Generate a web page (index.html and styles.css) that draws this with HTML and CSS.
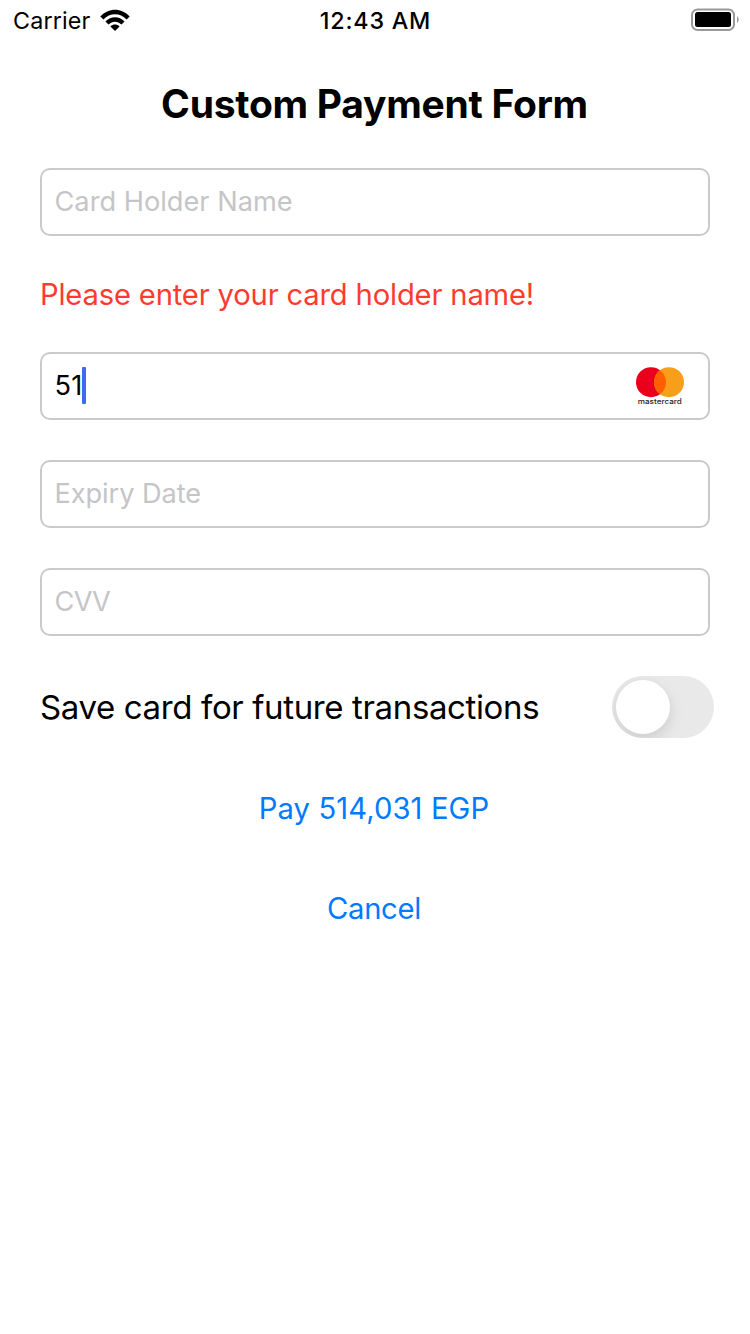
FILE: index.html
```html
<!DOCTYPE html>
<html lang="en">
<head>
<meta charset="utf-8">
<title>Custom Payment Form</title>
<link rel="stylesheet" href="styles.css">
</head>
<body>
<header class="status">
  <div class="carrier"><span class="carrier-name">Carrier</span>
    <svg class="wifi" width="30" height="22" viewBox="0 0 30 22">
      <path d="M.3 7.4C8.4-1.6 21.600-1.6 29.700 7.400L26.600 10.500C20.200 3.600 9.800 3.600 3.400 10.500Z"/>
      <path d="M5.400 12.500C10.900 6.700 19.100 6.700 24.600 12.500L21.500 15.600C17.700 11.700 12.300 11.700 8.500 15.600Z"/>
      <path d="M10.400 17.400C13.100 14.900 16.900 14.900 19.600 17.400L15 22Z"/>
    </svg>
  </div>
  <time class="clock">12:43 AM</time>
  <svg class="battery" width="50" height="24" viewBox="0 0 50 24">
    <rect x="3" y="1.500" width="42" height="20.500" rx="5.500" fill="none" stroke="#999" stroke-width="2"/>
    <rect x="6" y="4" width="36" height="15" rx="2.500" fill="#000"/>
    <path d="M48 8Q49.700 9.300 49.700 11.500T48 15Z" fill="#999"/>
  </svg>
</header>
<main class="form">
  <h1 class="title">Custom Payment Form</h1>
  <div class="field"><span class="hint">Card Holder Name</span></div>
  <p class="error">Please enter your card holder name!</p>
  <div class="field">
    <span class="value">51</span><span class="caret"></span>
    <svg class="brand" width="50" height="42" viewBox="0 0 50 42">
      <circle cx="16" cy="18.200" r="15" fill="#eb001b"/>
      <circle cx="34" cy="18.200" r="15" fill="#f79e1b"/>
      <path d="M25 6.200a15 15 0 0 1 0 24a15 15 0 0 1 0-24z" fill="#ff5f00"/>
      <text class="brand-name" x="2.800" y="40.400" textLength="44" lengthAdjust="spacingAndGlyphs">mastercard</text>
    </svg>
  </div>
  <div class="field"><span class="hint hint-date">Expiry Date</span></div>
  <div class="field"><span class="hint hint-cvv">CVV</span></div>
  <div class="save">
    <span class="save-label">Save card for future transactions</span>
    <span class="switch"><span class="knob"></span></span>
  </div>
  <div class="action pay"><span>Pay 514,031 EGP</span></div>
  <div class="action cancel"><span>Cancel</span></div>
</main>
</body>
</html>
```
FILE: styles.css
```css
* { box-sizing: border-box; }
body {
  margin: 0;
  background: #fff;
  color: #000;
  font-family: Inter, "Liberation Sans", sans-serif;
}
.status {
  display: grid;
  grid-template-columns: 1fr auto 1fr;
  align-items: center;
  height: 40px;
  padding: 0 11px 0 13px;
  font-size: 23.3px;
  line-height: 40px;
}
.carrier { display: flex; align-items: center; gap: 10px; }
.carrier-name { width: 77px; padding-top: 2px; line-height: 38px; letter-spacing: .15px; white-space: nowrap; }
.clock { padding: 2px 1px 0 0; line-height: 38px; font-weight: 500; letter-spacing: .8px; }
.battery { justify-self: end; }
.form { padding: 0 40px; }
.title {
  margin: 0;
  height: 128px;
  padding: 40px 1px 0 0;
  font-size: 39px;
  font-weight: 700;
  line-height: 48px;
  letter-spacing: -.27px;
  text-align: center;
}
.field {
  display: flex;
  align-items: center;
  height: 68px;
  margin-bottom: 40px;
  padding: 0 23px 2px 12.5px;
  border: 2px solid #cacaca;
  border-radius: 10px;
  font-size: 27.2px;
}
.hint { color: #c5c5c7; }
.hint-date { letter-spacing: -.08px; }
.hint-cvv { letter-spacing: -.7px; }
.value { width: 27.500px; letter-spacing: .3px; }
.caret { width: 4px; height: 37px; border-radius: 1px; background: #4169f0; }
.brand { margin-left: auto; }
.brand-name { font-size: 7.200px; font-weight: 500; fill: #231f20; }
.error {
  margin: 0;
  height: 76px;
  line-height: 38px;
  font-size: 29.2px;
  letter-spacing: -.17px;
  color: #ff3b30;
}
.save {
  display: flex;
  justify-content: space-between;
  align-items: center;
  height: 62px;
  margin-right: -4px;
  font-size: 33px;
  letter-spacing: -.37px;
}
.switch {
  width: 102px;
  height: 62px;
  padding: 4px;
  border-radius: 31px;
  background: #e9e9e9;
  overflow: hidden;
}
.knob {
  display: block;
  width: 54px;
  height: 54px;
  border-radius: 50%;
  background: #fff;
  box-shadow: 0 5px 14px rgba(0, 0, 0, .13);
}
.action {
  height: 60px;
  margin-top: 40px;
  padding: 2px 2px 0 0;
  font-size: 29.2px;
  line-height: 58px;
  text-align: center;
  color: #007aff;
}
.pay { letter-spacing: .1px; }
.cancel { letter-spacing: -.3px; }
```
